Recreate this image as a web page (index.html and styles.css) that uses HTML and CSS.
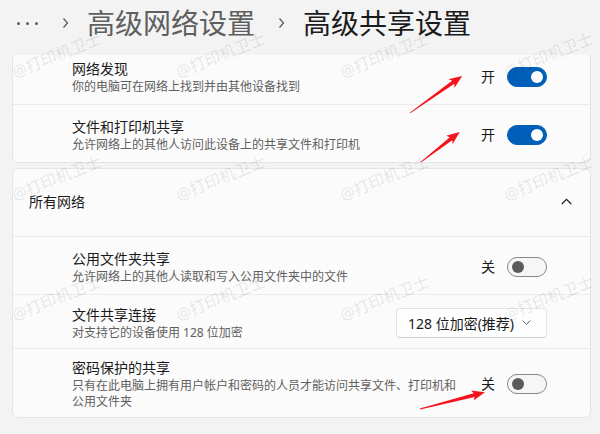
FILE: index.html
```html
<!DOCTYPE html>
<html>
<head>
    <title>高级共享设置</title>
    <meta charset="UTF-8">
    <meta name="viewport" content="width=device-width, initial-scale=1">
    <link rel="stylesheet" href="styles.css">
</head>
<body>
    <div class="page">

        <header class="crumbs">
            <span class="dots"><i></i><i></i><i></i></span>
            <svg class="sep" width="7" height="12" viewBox="0 0 7 12"><path d="M1.5 1.5 L5.5 6 L1.5 10.5" /></svg>
            <span class="crumb">高级网络设置</span>
            <svg class="sep" width="7" height="12" viewBox="0 0 7 12"><path d="M1.5 1.5 L5.5 6 L1.5 10.5" /></svg>
            <span class="crumb current">高级共享设置</span>
        </header>

        <main class="scroller">
            <!-- current profile, scrolled up a little -->
            <section class="card card-scrolled">
                <div class="row">
                    <div class="text">
                        <div class="title">网络发现</div>
                        <div class="desc">你的电脑可在网络上找到并由其他设备找到</div>
                    </div>
                    <div class="control">
                        <span class="state">开</span>
                        <span class="toggle on"></span>
                    </div>
                </div>
                <div class="row">
                    <div class="text">
                        <div class="title">文件和打印机共享</div>
                        <div class="desc">允许网络上的其他人访问此设备上的共享文件和打印机</div>
                    </div>
                    <div class="control">
                        <span class="state">开</span>
                        <span class="toggle on"></span>
                    </div>
                </div>
            </section>

            <section class="card">
                <div class="row head">
                    <span class="title">所有网络</span>
                    <svg class="chevron-up" width="11" height="7" viewBox="0 0 11 7"><path d="M0.8 6 L5.5 1.3 L10.2 6" /></svg>
                </div>
                <div class="row">
                    <div class="text">
                        <div class="title">公用文件夹共享</div>
                        <div class="desc">允许网络上的其他人读取和写入公用文件夹中的文件</div>
                    </div>
                    <div class="control">
                        <span class="state">关</span>
                        <span class="toggle"></span>
                    </div>
                </div>
                <div class="row compact">
                    <div class="text">
                        <div class="title">文件共享连接</div>
                        <div class="desc">对支持它的设备使用 128 位加密</div>
                    </div>
                    <div class="control">
                        <div class="select">
                            <span>128 位加密(推荐)</span>
                            <svg width="9" height="5" viewBox="0 0 9 5"><path d="M0.6 0.6 L4.5 4.4 L8.4 0.6" /></svg>
                        </div>
                    </div>
                </div>
                <div class="row">
                    <div class="text">
                        <div class="title">密码保护的共享</div>
                        <div class="desc">只有在此电脑上拥有用户帐户和密码的人员才能访问共享文件、打印机和公用文件夹</div>
                    </div>
                    <div class="control">
                        <span class="state">关</span>
                        <span class="toggle"></span>
                    </div>
                </div>
            </section>
        </main>

        <div class="watermarks">
            <span>@打印机卫士</span><span>@打印机卫士</span><span>@打印机卫士</span><span>@打印机卫士</span>
            <span>@打印机卫士</span><span>@打印机卫士</span><span>@打印机卫士</span><span>@打印机卫士</span>
            <span>@打印机卫士</span><span>@打印机卫士</span><span>@打印机卫士</span><span>@打印机卫士</span>
        </div>

        <svg class="arrows" width="600" height="434" viewBox="0 0 600 434">
            <g transform="translate(410 113) rotate(-35.4)">
                <path d="M0 -0.4 L53 -1.9 L51 -5.2 L64 0 L51 5.2 L53 1.9 L0 0.4 Z" />
            </g>
            <g transform="translate(421 162) rotate(-37.8)">
                <path d="M0 -0.4 L38 -1.9 L36 -5.2 L49 0 L36 5.2 L38 1.9 L0 0.4 Z" />
            </g>
            <g transform="translate(420 409) rotate(-14.4)">
                <path d="M0 -0.4 L56 -1.9 L54 -5.2 L67 0 L54 5.2 L56 1.9 L0 0.4 Z" />
            </g>
        </svg>

    </div>
</body>
</html>
```

FILE: styles.css
```css
body {
    margin: 0;
    padding: 0;
    background: #f3f3f3;
    font-family: "Noto Sans", "Noto Sans CJK SC", sans-serif;
    color: #1a1a1a;
}

.page {
    position: relative;
    width: 600px;
    height: 434px;
    overflow: hidden;
}

/* breadcrumb header */
.crumbs {
    height: 55px;
    box-sizing: border-box;
    padding: 0 0 9px 17px;
    display: flex;
    align-items: center;
}

.dots {
    display: flex;
    gap: 6px;
}

.dots i {
    width: 3px;
    height: 3px;
    border-radius: 50%;
    background: #5d5d5d;
}

.sep {
    margin-left: 24px;
    fill: none;
    stroke: #5d5d5d;
    stroke-width: 1.3;
}

.crumb + .sep {
    margin-left: 23px;
}

.crumb {
    margin-left: 18px;
    font-size: 28px;
    line-height: 36px;
    color: #5f5f5f;
}

.crumb.current {
    color: #1b1b1b;
}

/* settings list */
.scroller {
    height: 379px;
    overflow: hidden;
    padding: 0 9px 0 12px;
}

.card {
    background: #fbfbfb;
    border: 1px solid #e5e5e5;
    border-radius: 6px;
    margin-top: 5px;
}

.card-scrolled {
    margin-top: -9px;
}

.row {
    display: flex;
    align-items: center;
    min-height: 58px;
    box-sizing: border-box;
    padding: 9px 43px 7px 59px;
}

.card-scrolled .row:first-child {
    min-height: 57px;
}

.row + .row {
    border-top: 1px solid #ebebeb;
}

.row.head {
    min-height: 67px;
    padding: 0 18px 2px 16px;
    justify-content: space-between;
}

.row.compact {
    min-height: 54px;
}

.text {
    flex: 1;
    max-width: 388px;
}

.title {
    font-size: 14px;
    line-height: 20px;
    color: #1a1a1a;
}

.desc {
    font-size: 12px;
    line-height: 16px;
    color: #5f5f5f;
}

.chevron-up {
    fill: none;
    stroke: #1a1a1a;
    stroke-width: 1.1;
}

.control {
    margin-left: auto;
    display: flex;
    align-items: center;
    gap: 12px;
}

.state {
    font-size: 14px;
    line-height: 20px;
    color: #1a1a1a;
}

.toggle {
    position: relative;
    width: 40px;
    height: 20px;
    box-sizing: border-box;
    border-radius: 10px;
    border: 1px solid #868686;
    background: #f6f6f6;
}

.toggle::after {
    content: "";
    position: absolute;
    top: 3px;
    left: 4px;
    width: 12px;
    height: 12px;
    border-radius: 50%;
    background: #5b5b5b;
}

.toggle.on {
    background: #005fb8;
    border-color: #005fb8;
}

.toggle.on::after {
    left: auto;
    right: 3px;
    background: #fff;
}

.select {
    width: 151px;
    height: 30px;
    box-sizing: border-box;
    display: flex;
    align-items: center;
    justify-content: space-between;
    padding: 0 15px 0 11px;
    border: 1px solid #e5e5e5;
    border-bottom-color: #cfcfcf;
    border-radius: 4px;
    background: #fefefe;
    font-size: 14px;
    color: #1a1a1a;
}

.select svg {
    fill: none;
    stroke: #5f5f5f;
    stroke-width: 1;
}

/* overlays */
.watermarks {
    position: absolute;
    top: -9px;
    left: -26px;
    display: grid;
    grid-template-columns: repeat(4, 164px);
    grid-template-rows: 126px 120px 120px;
    place-items: center;
    pointer-events: none;
}

.watermarks span {
    font-size: 16px;
    white-space: nowrap;
    color: rgba(0, 0, 0, 0.1);
    transform: rotate(-22deg);
}

.arrows {
    position: absolute;
    top: 0;
    left: 0;
    pointer-events: none;
}

.arrows path {
    fill: #f5121a;
}
```
